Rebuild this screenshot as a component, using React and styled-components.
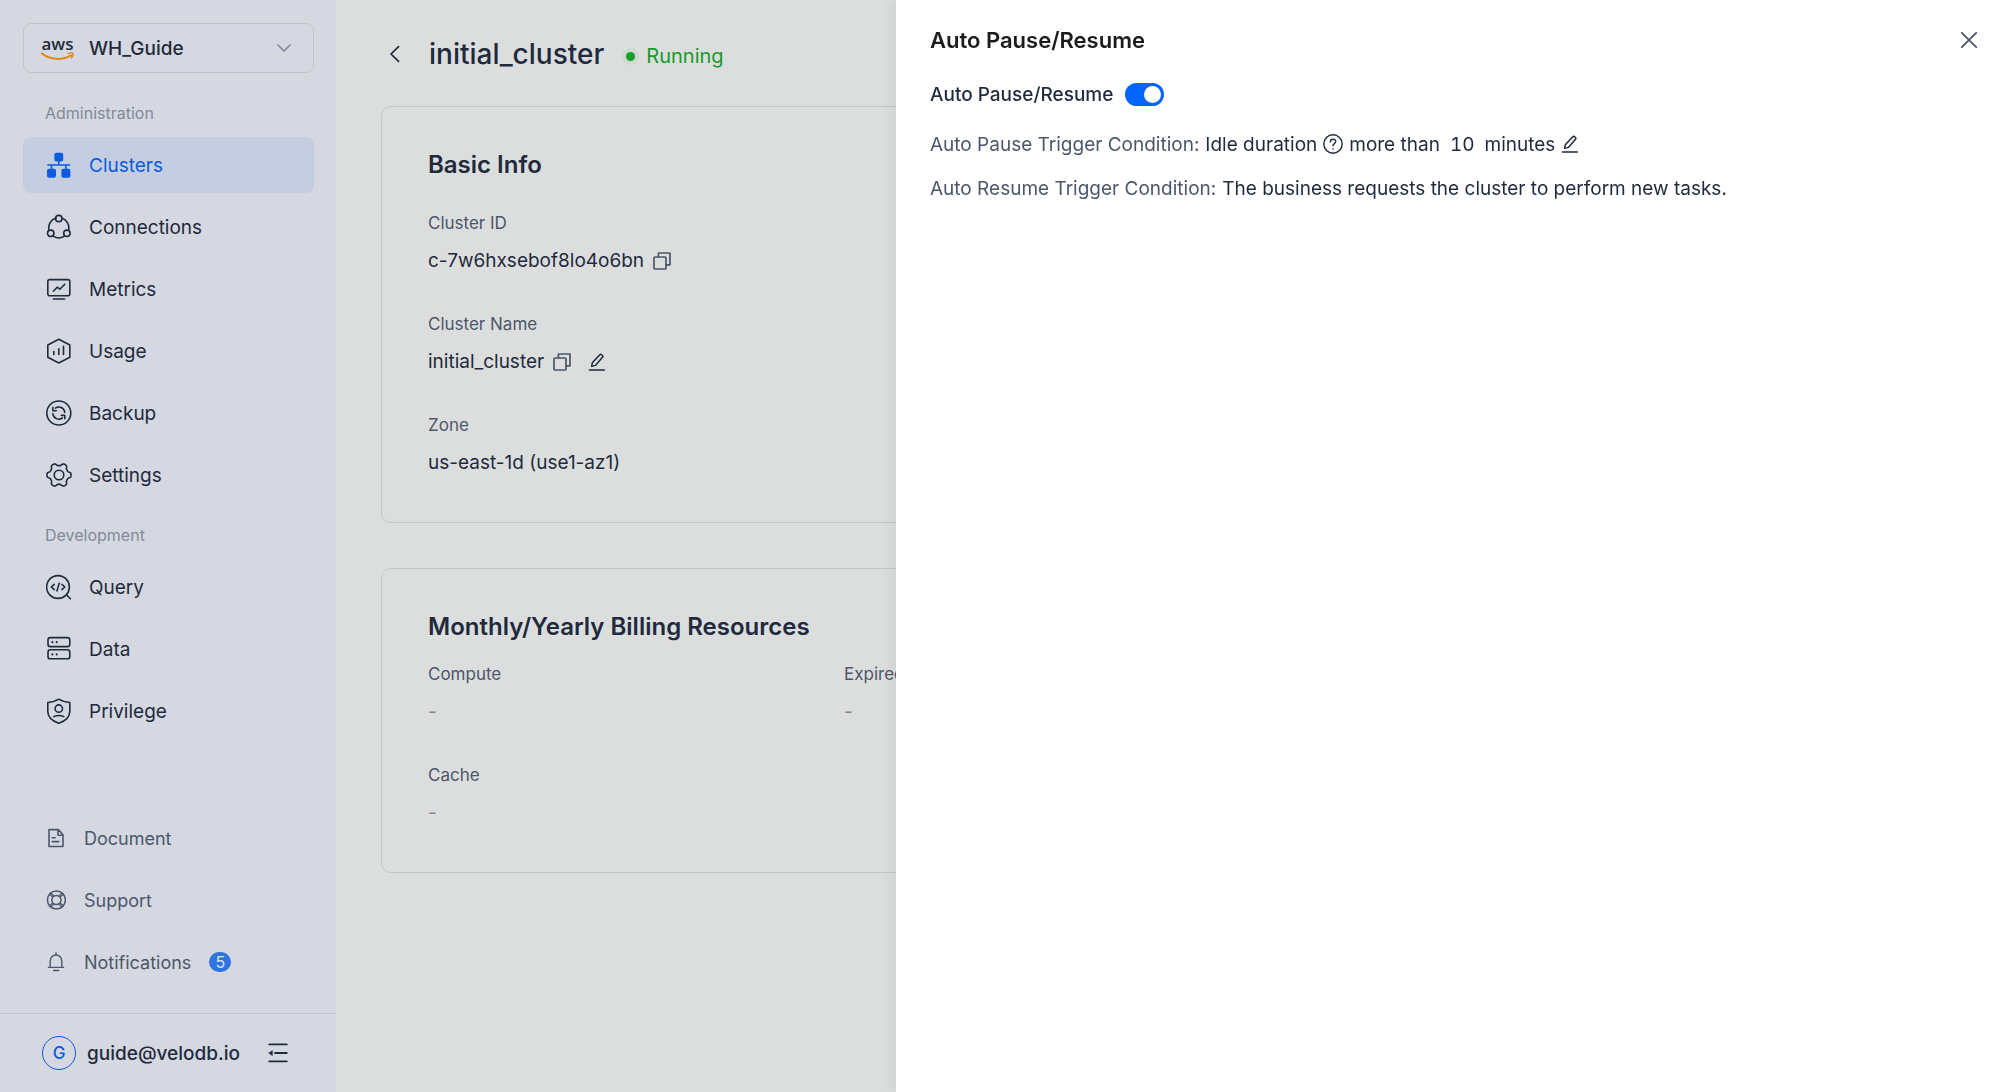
import React from "react";
import styled, { createGlobalStyle } from "styled-components";

const c = {
  ink: "#1f2a3d",
  soft: "#4c576b",
  faint: "#808a9b",
  side: "#d5d8e0",
  page: "#dcdedd",
  line: "#c3c6d0",
  blue: "#0b5be0",
};

const Global = createGlobalStyle`
  *, *::before, *::after { box-sizing: border-box; }
  html, body { margin: 0; height: 100%; }
  body {
    font-family: Inter, "Liberation Sans", sans-serif;
    color: ${c.ink};
    background: ${c.page};
    overflow: hidden;
  }
  h1, h2, p, dl, dt, dd, ul { margin: 0; padding: 0; }
  button, select { font: inherit; color: inherit; }
`;

const Shell = styled.div`
  display: flex;
  height: 100vh;
`;

const Sidebar = styled.aside`
  flex: 0 0 336px;
  display: flex;
  flex-direction: column;
  background: ${c.side};
`;

const SideBody = styled.div`
  flex: 1;
  display: flex;
  flex-direction: column;
  padding: 23px 22px 23px 23px;
`;

const Picker = styled.label`
  display: flex;
  align-items: center;
  gap: 15px;
  height: 50px;
  padding: 0 20px 0 17px;
  border: 1px solid #c1c4c9;
  border-radius: 8px;
`;

const PickerSelect = styled.select`
  flex: 1;
  appearance: none;
  border: 0;
  padding: 0;
  background: transparent;
  font-size: 19px;
  font-weight: 500;
  outline: none;
`;

const PickerArrow = styled.span`
  display: flex;
  color: ${c.faint};
`;

const AwsMark = styled.span`
  display: flex;
  flex-direction: column;
  align-items: center;
  width: 33px;
`;

const AwsWord = styled.span`
  font-family: "Open Sans", "Noto Sans", sans-serif;
  font-size: 17px;
  font-weight: 600;
  line-height: 16px;
`;

const Section = styled.section`
  padding-top: 28px;
  & + & { padding-top: 20px; }
`;

const SectionLabel = styled.h2`
  padding-left: 22px;
  margin-bottom: 12px;
  font-size: 16px;
  font-weight: 400;
  line-height: 24px;
  color: ${c.faint};
`;

const NavList = styled.ul`
  list-style: none;
  display: flex;
  flex-direction: column;
  gap: 6px;
`;

const NavLink = styled.a`
  display: flex;
  align-items: center;
  gap: 17px;
  height: 56px;
  padding-left: 23px;
  border-radius: 8px;
  font-size: 19px;
  text-decoration: none;
  color: ${(p) => (p.$active ? c.blue : c.ink)};
  background: ${(p) => (p.$active ? "#c5cde0" : "transparent")};
`;

const HelpList = styled(NavList)`
  margin-top: auto;
`;

const HelpLink = styled(NavLink)`
  gap: 18px;
  font-size: 18px;
  color: ${c.soft};
`;

const Badge = styled.span`
  width: 22px;
  height: 20px;
  border-radius: 10px;
  background: #2f74e0;
  color: #dfe6f5;
  font-size: 16px;
  line-height: 20px;
  text-align: center;
`;

const Account = styled.footer`
  display: flex;
  align-items: center;
  height: 79px;
  padding-left: 42px;
  border-top: 1px solid #c0c5d6;
`;

const Avatar = styled.span`
  width: 34px;
  height: 34px;
  margin-right: 11px;
  border: 1px solid ${c.blue};
  border-radius: 50%;
  color: ${c.blue};
  font-size: 17px;
  font-weight: 500;
  line-height: 33px;
  text-align: center;
`;

const Email = styled.span`
  font-size: 19px;
  font-weight: 500;
  margin-right: 28px;
`;

const IconButton = styled.button`
  display: inline-flex;
  align-items: center;
  justify-content: center;
  padding: 0;
  border: 0;
  background: none;
  color: ${(p) => (p.$soft ? c.soft : c.ink)};
  cursor: pointer;
`;

const Main = styled.main`
  flex: 1;
  min-width: 0;
  padding: 33px 45px 0;
`;

const TitleRow = styled.header`
  display: flex;
  align-items: center;
  height: 42px;
  margin-bottom: 31px;
  padding-left: 6px;
`;

const Title = styled.h1`
  margin: 0 18px 0 26px;
  font-size: 28px;
  font-weight: 500;
  line-height: 42px;
`;

const Status = styled.span`
  display: flex;
  align-items: center;
  gap: 7px;
  padding-top: 4px;
  font-size: 20px;
  color: #169a29;
`;

const Dot = styled.span`
  width: 9px;
  height: 9px;
  margin: 4px;
  border-radius: 50%;
  background: #18a02d;
  box-shadow: 0 0 0 4px #cfdbd0;
`;

const Card = styled.section`
  margin-bottom: 45px;
  padding: 40px 46px 45px;
  border: 1px solid ${c.line};
  border-radius: 10px;
`;

const CardTitle = styled.h2`
  margin-bottom: ${(p) => p.$gap}px;
  font-size: 24px;
  font-weight: 600;
  line-height: 36px;
`;

const Fields = styled.dl`
  display: grid;
  grid-template-columns: repeat(${(p) => p.$columns}, 392px);
  gap: 37px 24px;
`;

const Field = styled.div`
  grid-column-start: ${(p) => p.$column || "auto"};
`;

const Term = styled.dt`
  margin-bottom: 11px;
  font-size: 17px;
  line-height: 24px;
  color: ${c.soft};
`;

const Value = styled.dd`
  display: flex;
  align-items: center;
  gap: 9px;
  margin: 0;
  font-size: 19px;
  line-height: 29px;
  color: ${(p) => (p.$empty ? c.faint : c.ink)};
`;

const EditSpace = styled.span`
  display: inline-flex;
  margin-left: 8px;
`;

const Drawer = styled.aside`
  position: fixed;
  top: 0;
  right: 0;
  bottom: 0;
  width: 1120px;
  padding: 24px 34px;
  background: #fff;
  box-shadow: -4px 0 12px rgba(0, 0, 0, 0.06);
`;

const DrawerHead = styled.header`
  display: flex;
  align-items: center;
  justify-content: space-between;
  padding-right: 4px;
  margin-bottom: 23px;
`;

const DrawerTitle = styled.h2`
  font-size: 22px;
  font-weight: 600;
  line-height: 32px;
  color: #1c1c1e;
`;

const SwitchRow = styled.label`
  display: flex;
  align-items: center;
  gap: 12px;
  height: 30px;
  margin-bottom: 20px;
  font-size: 19px;
  font-weight: 500;
`;

const Switch = styled.input`
  appearance: none;
  display: flex;
  width: 39px;
  height: 23px;
  margin: 0;
  padding: 3px;
  border-radius: 12px;
  background: #0064ff;
  &::before {
    content: "";
    width: 17px;
    height: 17px;
    margin-left: auto;
    border-radius: 50%;
    background: #fff;
  }
  &:not(:checked) { background: #b8bfcc; }
  &:not(:checked)::before { margin-left: 0; }
`;

const Condition = styled.p`
  display: flex;
  align-items: center;
  gap: 6px;
  height: 30px;
  margin-bottom: 14px;
  font-size: 19px;
`;

const ConditionLabel = styled.span`
  color: ${c.soft};
`;

const Amount = styled.span`
  margin: 0 4px;
  font-variant-numeric: tabular-nums;
`;

const Svg = ({ w = 26, h = w, sw = 1.6, children }) => (
  <svg
    width={w}
    height={h}
    viewBox={`0 0 ${w} ${h}`}
    fill="none"
    stroke="currentColor"
    strokeWidth={sw}
    strokeLinecap="round"
    strokeLinejoin="round"
    aria-hidden="true"
  >
    {children}
  </svg>
);

const gearPath = (() => {
  const pts = [];
  for (let i = 0; i < 120; i += 1) {
    const t = (i / 120) * Math.PI * 2;
    const r = 10.7 + 1.4 * Math.tanh(1.9 * Math.cos(6 * t));
    pts.push(`${(13 + r * Math.cos(t)).toFixed(2)} ${(13 + r * Math.sin(t)).toFixed(2)}`);
  }
  return `M${pts.join("L")}Z`;
})();

const icons = {
  clusters: (
    <Svg>
      <g fill="currentColor" stroke="none">
        <rect x="8.4" y="0.7" width="8.8" height="8.8" rx="2" />
        <rect x="1" y="16.7" width="9" height="9" rx="2" />
        <rect x="15.4" y="16.7" width="9" height="9" rx="2" />
      </g>
      <path d="M12.8 9v4M1.3 13h23M5.5 13v4M19.9 13v4" strokeLinecap="butt" />
    </Svg>
  ),
  connections: (
    <Svg>
      <circle cx="12.8" cy="4.6" r="3.2" />
      <circle cx="4.7" cy="19.3" r="3.2" />
      <circle cx="20.9" cy="19.3" r="3.2" />
      <path d="M9.8 4.1A10.2 10.2 0 0 0 3 16.2M15.8 4.1A10.2 10.2 0 0 1 22.6 16.2M7.5 22.4A10.2 10.2 0 0 0 18.1 22.4" />
    </Svg>
  ),
  metrics: (
    <Svg>
      <rect x="1.8" y="3.6" width="22" height="16.2" rx="2" />
      <path d="M7.4 23h11.2M7.4 15.2l3.8-4 2.6 2 5-5" />
    </Svg>
  ),
  usage: (
    <Svg>
      <path d="M12.8 1.2 23.8 7v12.2l-11 5.8-11-5.8V7Z" />
      <path d="M7.8 13.6v2.8M12.8 10.9v5.5M17.5 8.4v8" />
    </Svg>
  ),
  backup: (
    <Svg>
      <circle cx="12.8" cy="13" r="12" />
      <path d="M6.9 7.4v3.4h3.4M9.4 8.1a6 6 0 0 1 9.4 4.2M18.8 18.8v-3.4h-3.4M16.4 18a6 6 0 0 1-9.5-4.2" />
    </Svg>
  ),
  settings: (
    <Svg>
      <path d={gearPath} />
      <circle cx="13" cy="13" r="4.8" />
    </Svg>
  ),
  query: (
    <Svg>
      <circle cx="12" cy="13" r="11.4" />
      <path d="m20.6 21 3.8 3.8M8.2 10.3 5.3 13l2.9 2.7M15.9 10.3l2.9 2.7-2.9 2.7M13.2 9.3l-2.2 7.6" />
    </Svg>
  ),
  data: (
    <Svg>
      <rect x="2" y="1.6" width="21.8" height="9" rx="2.4" />
      <rect x="2" y="13.8" width="21.8" height="9" rx="2.4" />
      <path d="M6.4 6.1v.2M10.7 6.1v.2M6.4 18.2v.2M10.7 18.2v.2" strokeWidth="2" />
    </Svg>
  ),
  privilege: (
    <Svg>
      <path d="M12.8 1.2c3 2 6.8 3 11 3.3v9c0 5.5-4 9.3-11 11.8-7-2.5-11-6.3-11-11.8v-9c4.2-.3 8-1.3 11-3.3Z" />
      <circle cx="12.8" cy="10.6" r="3.7" />
      <path d="M7.8 18.6c3-1.4 7-1.4 10 0" />
    </Svg>
  ),
  document: (
    <Svg w={20} sw={1.6}>
      <path d="M3 1.6h9.4L17 6.8v11.7H3ZM12 1.8v5.4h5M6.2 9.8h3M6.2 13.6h6.6" />
    </Svg>
  ),
  support: (
    <Svg w={20} sw={1.5}>
      <circle cx="10.4" cy="10" r="9" />
      <circle cx="10.4" cy="10" r="4.6" />
      <path d="m3.6 4.2 3.2 2.8M5 3l2.8 3.2M17.2 4.2 14 7M15.8 3 13 6.2M3.6 15.8 6.8 13M5 17l2.8-3.2M17.2 15.8 14 13M15.8 17 13 13.8" strokeWidth="1.2" />
    </Svg>
  ),
  bell: (
    <Svg w={20} sw={1.4}>
      <path d="M10 .8v2M2.4 15.4h15.2M4.2 15.4V8.8a5.8 5.8 0 0 1 11.6 0v6.6M7.6 18.5h5" />
    </Svg>
  ),
};

const CopyIcon = () => (
  <Svg w={18} sw={1.7}>
    <rect x="1" y="5" width="12" height="12" rx="1" />
    <path d="M5.4 5V1H17v11.8h-4" />
  </Svg>
);

const PencilIcon = () => (
  <Svg w={18} sw={1.5}>
    <path d="M1.4 17h15M3.7 13.4l.6-3.6L11.8 1.7c1-1 3.8 1 2.9 2.4L7.4 12.4Z" />
  </Svg>
);

const admin = [
  ["Clusters", "clusters"],
  ["Connections", "connections"],
  ["Metrics", "metrics"],
  ["Usage", "usage"],
  ["Backup", "backup"],
  ["Settings", "settings"],
];
const dev = [
  ["Query", "query"],
  ["Data", "data"],
  ["Privilege", "privilege"],
];
const help = [
  ["Document", "document"],
  ["Support", "support"],
  ["Notifications", "bell", 5],
];

const Nav = ({ label, items, active }) => (
  <Section>
    <SectionLabel>{label}</SectionLabel>
    <NavList>
      {items.map(([text, icon]) => (
        <li key={text}>
          <NavLink href="#" $active={text === active}>
            {icons[icon]}
            {text}
          </NavLink>
        </li>
      ))}
    </NavList>
  </Section>
);

export default function App() {
  return (
    <>
      <Global />
      <Shell>
        <Sidebar>
          <SideBody>
            <Picker>
              <AwsMark>
                <AwsWord>aws</AwsWord>
                <svg width="33" height="9" viewBox="0 0 33 9" fill="none" stroke="#dd8a1c" strokeLinecap="round" aria-hidden="true">
                  <path d="M.8 1.4C9 8 21.5 8.6 30 3.4" strokeWidth="2" />
                  <path d="M27 1.4c2.2-.5 4.6-.6 5 0 .3.7-.3 2.8-1.6 4.4" strokeWidth="1.4" />
                </svg>
              </AwsMark>
              <PickerSelect aria-label="Warehouse" defaultValue="WH_Guide">
                <option>WH_Guide</option>
              </PickerSelect>
              <PickerArrow>
                <Svg w={18} sw={1.7}>
                  <path d="m3 6 6 6 6-6" />
                </Svg>
              </PickerArrow>
            </Picker>
            <Nav label="Administration" items={admin} active="Clusters" />
            <Nav label="Development" items={dev} />
            <HelpList>
              {help.map(([text, icon, count]) => (
                <li key={text}>
                  <HelpLink href="#">
                    {icons[icon]}
                    {text}
                    {count && <Badge>{count}</Badge>}
                  </HelpLink>
                </li>
              ))}
            </HelpList>
          </SideBody>
          <Account>
            <Avatar>G</Avatar>
            <Email>guide@velodb.io</Email>
            <IconButton aria-label="Collapse menu">
              <Svg w={20} sw={1.8}>
                <path d="M1.2 1.4h17.6M7 10h11.8M1.2 18.4h17.6" />
                <path d="M.8 10 4.4 7.6v4.8Z" fill="currentColor" strokeWidth=".5" />
              </Svg>
            </IconButton>
          </Account>
        </Sidebar>

        <Main>
          <TitleRow>
            <IconButton aria-label="Back">
              <Svg w={16} h={20} sw={1.7}>
                <path d="M11.6 2.6 4 10l7.6 7.4" />
              </Svg>
            </IconButton>
            <Title>initial_cluster</Title>
            <Status>
              <Dot />
              Running
            </Status>
          </TitleRow>

          <Card>
            <CardTitle $gap={28}>Basic Info</CardTitle>
            <Fields $columns={1}>
              <Field>
                <Term>Cluster ID</Term>
                <Value>
                  c-7w6hxsebof8lo4o6bn
                  <IconButton $soft aria-label="Copy cluster ID"><CopyIcon /></IconButton>
                </Value>
              </Field>
              <Field>
                <Term>Cluster Name</Term>
                <Value>
                  initial_cluster
                  <IconButton $soft aria-label="Copy cluster name"><CopyIcon /></IconButton>
                  <EditSpace>
                    <IconButton aria-label="Edit cluster name"><PencilIcon /></IconButton>
                  </EditSpace>
                </Value>
              </Field>
              <Field>
                <Term>Zone</Term>
                <Value>us-east-1d (use1-az1)</Value>
              </Field>
            </Fields>
          </Card>

          <Card>
            <CardTitle $gap={17}>Monthly/Yearly Billing Resources</CardTitle>
            <Fields $columns={2}>
              <Field>
                <Term>Compute</Term>
                <Value $empty>-</Value>
              </Field>
              <Field>
                <Term>Expired</Term>
                <Value $empty>-</Value>
              </Field>
              <Field $column={1}>
                <Term>Cache</Term>
                <Value $empty>-</Value>
              </Field>
            </Fields>
          </Card>
        </Main>
      </Shell>

      <Drawer aria-label="Auto Pause/Resume">
        <DrawerHead>
          <DrawerTitle>Auto Pause/Resume</DrawerTitle>
          <IconButton $soft aria-label="Close">
            <Svg w={18} sw={1.8}>
              <path d="m1.8 1.8 14.4 14.4M16.2 1.8 1.8 16.2" />
            </Svg>
          </IconButton>
        </DrawerHead>
        <SwitchRow>
          Auto Pause/Resume
          <Switch type="checkbox" role="switch" defaultChecked />
        </SwitchRow>
        <Condition>
          <ConditionLabel>Auto Pause Trigger Condition:</ConditionLabel>
          <span>Idle duration</span>
          <IconButton aria-label="About idle duration">
            <Svg w={20} sw={1.4}>
              <circle cx="10" cy="10" r="9.2" />
              <path d="M7.3 7.9c.2-3.6 5.5-3.5 5.4-.3 0 2-2.7 2.1-2.7 4.2M10 14.6v.3" />
            </Svg>
          </IconButton>
          <span>more than</span>
          <Amount>10</Amount>
          <span>minutes</span>
          <IconButton aria-label="Edit idle duration"><PencilIcon /></IconButton>
        </Condition>
        <Condition>
          <ConditionLabel>Auto Resume Trigger Condition:</ConditionLabel>
          <span>The business requests the cluster to perform new tasks.</span>
        </Condition>
      </Drawer>
    </>
  );
}
